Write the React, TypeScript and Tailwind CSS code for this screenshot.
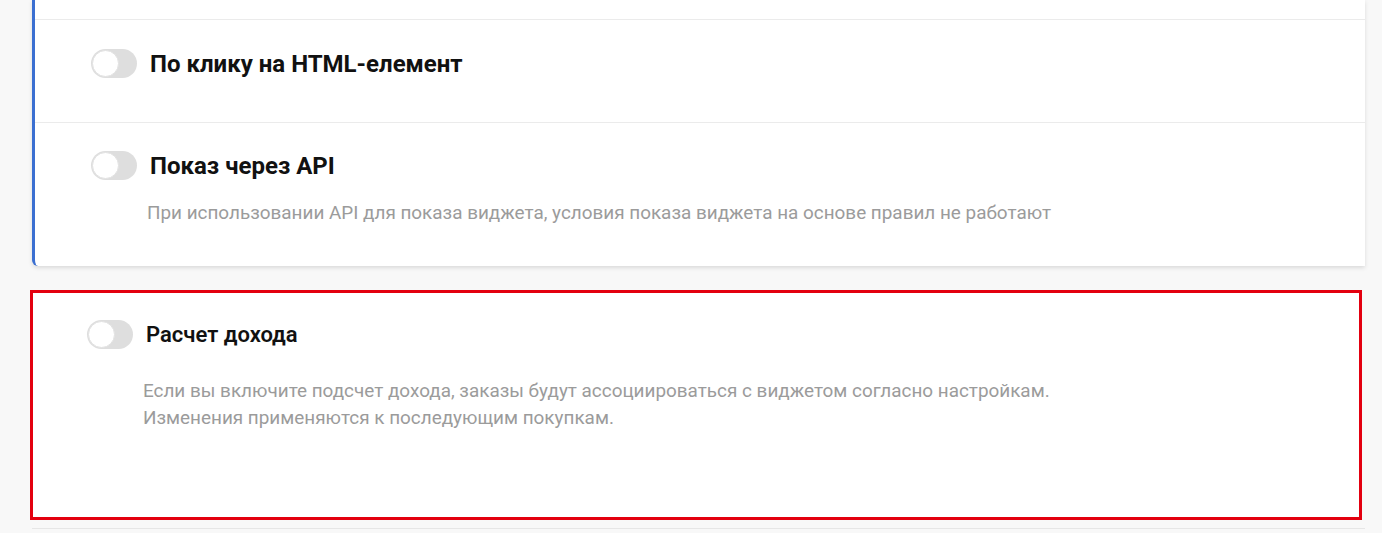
import React from 'react';

const Toggle: React.FC = () => (
  <div className="relative w-[46px] h-[29px] shrink-0 rounded-full bg-[#dedede]">
    <div className="absolute left-[1px] top-[1px] w-[27px] h-[27px] rounded-full bg-white border border-[#e2e2e2]" />
  </div>
);

interface RowProps {
  title: string;
  titleClass?: string;
  descClass?: string;
  children?: React.ReactNode;
}

const Row: React.FC<RowProps> = ({ title, titleClass = 'text-[24px] font-bold', descClass = 'mt-[19px]', children }) => (
  <div>
    <div className="flex items-center gap-[13px]">
      <Toggle />
      <span className={`${titleClass} text-[#111] leading-none`}>{title}</span>
    </div>
    {children && (
      <div className={`${descClass} pl-[56px] text-[18.9px] leading-[27px] text-[#9b9b9b]`}>{children}</div>
    )}
  </div>
);

export default function App() {
  return (
    <div
      className="w-full h-[533px] overflow-hidden bg-[#f8f8f8] pl-[32px] pr-[17px] relative"
      style={{ fontFamily: 'Roboto, "Liberation Sans", sans-serif' }}
    >
      <div className="bg-white border-l-[3px] border-[#3b6fd1] rounded-bl-[6px] shadow-[0_2px_4px_rgba(0,0,0,0.12)]">
        <div className="h-[20px] border-b border-[#ebebeb]" />
        <div className="h-[103px] pt-[29px] pl-[56px] border-b border-[#ebebeb]">
          <Row title="По клику на HTML-елемент" />
        </div>
        <div className="h-[143px] pt-[28px] pl-[56px]">
          <Row title="Показ через API">
            При использовании API для показа виджета, условия показа виджета на основе правил не работают
          </Row>
        </div>
      </div>

      <div className="mt-[24px] ml-[-2px] w-[1332px] h-[230px] bg-white border-[3px] border-[#e3000f] pt-[27px] pl-[54px]">
        <Row title="Расчет дохода" titleClass="text-[22px] font-semibold" descClass="mt-[28px]">
          Если вы включите подсчет дохода, заказы будут ассоциироваться с виджетом согласно настройкам.
          <br />
          Изменения применяются к последующим покупкам.
        </Row>
      </div>
      <div className="mt-[8px] h-px bg-[#e6e6e6]" />
    </div>
  );
}
